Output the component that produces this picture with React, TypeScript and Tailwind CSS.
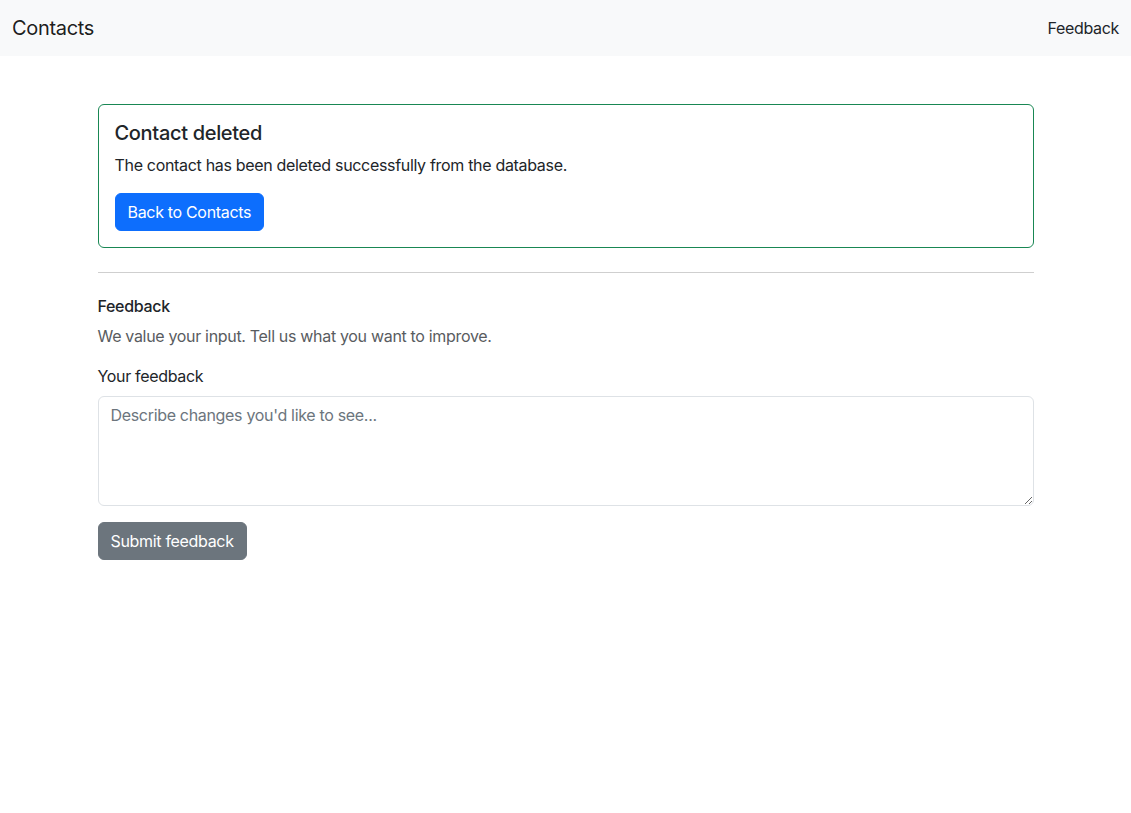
const App = () => {
  return (
    <div className="min-h-screen bg-white font-['Inter','Liberation_Sans',sans-serif] text-[16px] leading-6 tracking-[-0.02em] text-[#212529]">
      <nav className="bg-[#f8f9fa] h-14 flex items-center justify-between px-3">
        <a href="#" className="text-[20px] leading-[30px] text-black/90">
          Contacts
        </a>
        <a href="#" className="text-[16px] text-[#212529]">
          Feedback
        </a>
      </nav>

      <div className="max-w-[960px] mx-auto px-3 mt-12">
        <div className="border border-[#198754] rounded-md p-4">
          <h5 className="text-[20px] leading-6 font-medium mb-2">Contact deleted</h5>
          <p className="mb-4">The contact has been deleted successfully from the database.</p>
          <button className="bg-[#0d6efd] border border-[#0d6efd] text-white rounded-md px-3 py-1.5 leading-6">
            Back to Contacts
          </button>
        </div>

        <hr className="my-6 border-t border-[#cfcfcf]" />

        <h6 className="text-[16px] leading-[19px] font-medium mb-2">Feedback</h6>
        <p className="text-[#595c5f] mb-4">We value your input. Tell us what you want to improve.</p>
        <label className="block mb-2">Your feedback</label>
        <textarea
          rows={4}
          placeholder="Describe changes you'd like to see..."
          className="block w-full border border-[#dee2e6] rounded-md px-3 py-1.5 leading-6 placeholder:text-[#6c757d] outline-none"
        />
        <button className="mt-4 bg-[#6c757d] border border-[#6c757d] text-white rounded-md px-3 py-1.5 leading-6">
          Submit feedback
        </button>
      </div>
    </div>
  );
};

export default App;
